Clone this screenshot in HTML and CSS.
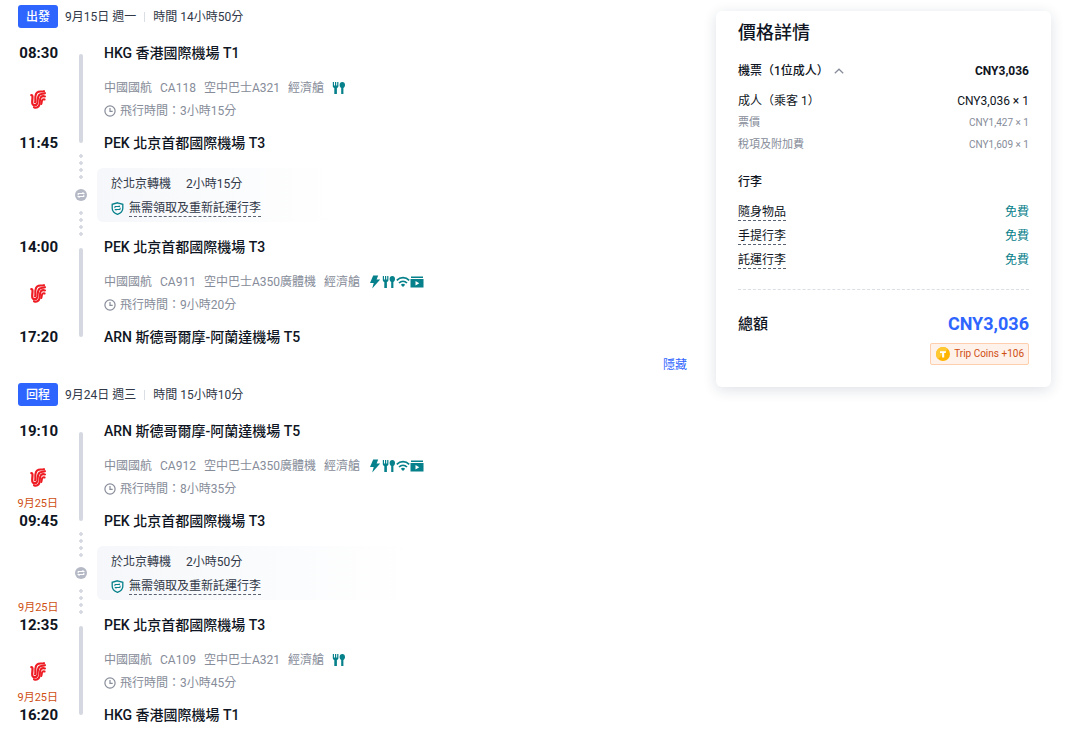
FILE: index.html
```html
<!DOCTYPE html>
<html lang="zh-Hant">
<head>
    <meta charset="UTF-8">
    <meta name="viewport" content="width=device-width, initial-scale=1.0">
    <title>行程詳情</title>
    <link rel="stylesheet" href="styles.css">
</head>
<body>
    <!-- shared icons -->
    <svg class="icon-set" aria-hidden="true">
        <symbol id="logo" viewBox="0 0 16 19">
            <g fill="none" stroke="#ee1c23" stroke-linecap="round" stroke-linejoin="round">
                <path stroke-width="2.2" d="M1.300 5.200c1 0 1.300.6 1.200 2.200l-.3 4.200c-.1 2.300.6 3.400 1.700 3.500"/>
                <path stroke-width="2.100" d="M4 17.200c2.200 1 4.900.1 5.500-2.700.6-2.900 0-5.700 1.500-7.400.9-.9 2.400-1.100 3.900-.7"/>
                <path stroke-width="2.100" d="M4.900 15c1.500.3 2.200-.8 2.500-2.600.4-3 0-6 2.200-7.700 1.500-1.200 3.700-.8 5.300-1.500"/>
                <path stroke-width="2.100" d="M5.100 12.400c.6-1.500-.1-4.500.4-6.700.6-3.200 2.900-4.300 5.300-4.200 1.200.1 2.400.2 3.200-.3"/>
                <path stroke-width="2" d="M11.200 14c.8-1.300.2-3.500 1.500-4.400.6-.4 1.300-.4 1.900-.1"/>
            </g>
        </symbol>
        <symbol id="clock" viewBox="0 0 12 12">
            <path fill="none" stroke="currentColor" stroke-width="1.2" d="M6 .9a5.100 5.100 0 1 1 0 10.200A5.100 5.100 0 0 1 6 .9zM6 3v3.300h2.700"/>
        </symbol>
        <symbol id="bolt" viewBox="0 0 14 14">
            <path fill="currentColor" d="M5.200.5h5L8.600 4.600h3.600L4.200 13.500l1.500-5.400H2z"/>
        </symbol>
        <symbol id="meal" viewBox="0 0 14 14">
            <path fill="currentColor" d="M.8 1h1.200v3.400h1V1h1.200v3.400h1V1h1.200v4c0 1.100-.6 1.800-1.500 2.100V13H2.300V7.100C1.400 6.800.8 6.100.8 5z"/>
            <path fill="currentColor" d="M10.300 1c1.700 0 2.700 1.300 2.700 3 0 1.500-.6 2.500-1.600 2.900V13H9.200V6.900C8.200 6.500 7.600 5.500 7.600 4c0-1.700 1-3 2.700-3z"/>
        </symbol>
        <symbol id="wifi" viewBox="0 0 14 14">
            <path fill="none" stroke="currentColor" stroke-width="1.700" d="M.8 5.300c3.500-3.500 8.900-3.500 12.400 0M3 8c2.300-2.200 5.700-2.200 8 0"/>
            <path fill="currentColor" d="M4.800 9.700c1.300-1.200 3.100-1.200 4.400 0L7 12z"/>
        </symbol>
        <symbol id="video" viewBox="0 0 14 14">
            <path fill="currentColor" d="M1 1.500h12V3H1z"/>
            <path fill="currentColor" fill-rule="evenodd" d="M.5 4h13v8.500H.5zM5.500 6v4.500L9.300 8.200z"/>
        </symbol>
        <symbol id="transfer" viewBox="0 0 12 12">
            <circle cx="6" cy="6" r="6" fill="#b4b9c5"/>
            <path fill="none" stroke="#fff" stroke-width="1.100" d="M3.200 6.300V4.500h5.500L7.500 3.300M8.800 5.700v1.800H3.300l1.200 1.200"/>
        </symbol>
        <symbol id="shield" viewBox="0 0 13 13">
            <path fill="none" stroke="currentColor" stroke-width="1.300" d="M6.500.8l5.300 1.500v4c0 2.700-1.900 4.800-5.300 6-3.400-1.200-5.300-3.300-5.300-6v-4z"/>
            <path fill="none" stroke="currentColor" stroke-width="1" d="M3.900 6.100V4.500h5L7.800 3.500M9.100 5.700v1.800H4l1.100 1.100"/>
        </symbol>
        <symbol id="chevron" viewBox="0 0 10 6">
            <path fill="none" stroke="currentColor" stroke-width="1.200" d="M.8 5.200L5 1.200l4.200 4"/>
        </symbol>
        <symbol id="coin" viewBox="0 0 14 14">
            <circle cx="7" cy="7" r="7" fill="#ffb400"/>
            <path fill="#ffc933" d="M2 11.900A7 7 0 0 1 11.900 2z"/>
            <path fill="#fff" d="M4 4.200h6.200l-.5 1.900H8.200v4.300H6.100V6.100H4z"/>
        </symbol>
    </svg>

    <div class="page">
        <main class="trips">
            <section class="trip">
                <header class="trip-header">
                    <span class="badge">出發</span>
                    <span class="trip-date">9月15日 週一</span>
                    <span class="trip-duration">時間 14小時50分</span>
                </header>

                <div class="leg">
                    <time class="time">08:30</time>
                    <div class="line"></div>
                    <h3 class="airport">HKG 香港國際機場 T1</h3>
                    <div class="airline"><svg class="logo"><use href="#logo"/></svg></div>
                    <div class="details">
                        <p class="flight"><span>中國國航</span><span>CA118</span><span>空中巴士A321</span><span>經濟艙</span>
                            <span class="services"><svg><use href="#meal"/></svg></span></p>
                        <p class="flying"><svg><use href="#clock"/></svg>飛行時間：3小時15分</p>
                    </div>
                    <time class="time">11:45</time>
                    <h3 class="airport">PEK 北京首都國際機場 T3</h3>
                </div>

                <div class="stopover">
                    <div class="next-day"></div>
                    <div class="dots"><svg><use href="#transfer"/></svg></div>
                    <div class="transfer">
                        <p><span>於北京轉機</span><span>2小時15分</span></p>
                        <p class="luggage-note"><svg><use href="#shield"/></svg><button type="button" class="hint">無需領取及重新託運行李</button></p>
                    </div>
                </div>

                <div class="leg">
                    <time class="time">14:00</time>
                    <div class="line"></div>
                    <h3 class="airport">PEK 北京首都國際機場 T3</h3>
                    <div class="airline"><svg class="logo"><use href="#logo"/></svg></div>
                    <div class="details">
                        <p class="flight"><span>中國國航</span><span>CA911</span><span>空中巴士A350廣體機</span><span>經濟艙</span>
                            <span class="services"><svg><use href="#bolt"/></svg><svg><use href="#meal"/></svg><svg><use href="#wifi"/></svg><svg><use href="#video"/></svg></span></p>
                        <p class="flying"><svg><use href="#clock"/></svg>飛行時間：9小時20分</p>
                    </div>
                    <time class="time">17:20</time>
                    <h3 class="airport">ARN 斯德哥爾摩-阿蘭達機場 T5</h3>
                </div>
                <a href="#" class="hide-link">隱藏</a>
            </section>

            <section class="trip">
                <header class="trip-header">
                    <span class="badge">回程</span>
                    <span class="trip-date">9月24日 週三</span>
                    <span class="trip-duration">時間 15小時10分</span>
                </header>

                <div class="leg">
                    <time class="time">19:10</time>
                    <div class="line"></div>
                    <h3 class="airport">ARN 斯德哥爾摩-阿蘭達機場 T5</h3>
                    <div class="airline"><svg class="logo"><use href="#logo"/></svg><span class="next-day">9月25日</span></div>
                    <div class="details">
                        <p class="flight"><span>中國國航</span><span>CA912</span><span>空中巴士A350廣體機</span><span>經濟艙</span>
                            <span class="services"><svg><use href="#bolt"/></svg><svg><use href="#meal"/></svg><svg><use href="#wifi"/></svg><svg><use href="#video"/></svg></span></p>
                        <p class="flying"><svg><use href="#clock"/></svg>飛行時間：8小時35分</p>
                    </div>
                    <time class="time">09:45</time>
                    <h3 class="airport">PEK 北京首都國際機場 T3</h3>
                </div>

                <div class="stopover">
                    <div class="next-day">9月25日</div>
                    <div class="dots"><svg><use href="#transfer"/></svg></div>
                    <div class="transfer transfer-wide">
                        <p><span>於北京轉機</span><span>2小時50分</span></p>
                        <p class="luggage-note"><svg><use href="#shield"/></svg><button type="button" class="hint">無需領取及重新託運行李</button></p>
                    </div>
                </div>

                <div class="leg">
                    <time class="time">12:35</time>
                    <div class="line"></div>
                    <h3 class="airport">PEK 北京首都國際機場 T3</h3>
                    <div class="airline"><svg class="logo"><use href="#logo"/></svg><span class="next-day">9月25日</span></div>
                    <div class="details">
                        <p class="flight"><span>中國國航</span><span>CA109</span><span>空中巴士A321</span><span>經濟艙</span>
                            <span class="services"><svg><use href="#meal"/></svg></span></p>
                        <p class="flying"><svg><use href="#clock"/></svg>飛行時間：3小時45分</p>
                    </div>
                    <time class="time">16:20</time>
                    <h3 class="airport">HKG 香港國際機場 T1</h3>
                </div>
            </section>
        </main>

        <aside class="price-card">
            <h2>價格詳情</h2>
            <div class="row row-strong">
                <button type="button" class="toggle" aria-expanded="true">機票（1位成人）<svg><use href="#chevron"/></svg></button>
                <span>CNY3,036</span>
            </div>
            <div class="fares">
                <div class="row"><span>成人（乘客 1）</span><span>CNY3,036 × 1</span></div>
                <div class="row row-small"><span>票價</span><span class="amount">CNY1,427 × 1</span></div>
                <div class="row row-small"><span>稅項及附加費</span><span class="amount">CNY1,609 × 1</span></div>
            </div>
            <h3>行李</h3>
            <div class="luggage">
                <div class="row"><button type="button" class="hint">隨身物品</button><span class="free">免費</span></div>
                <div class="row"><button type="button" class="hint">手提行李</button><span class="free">免費</span></div>
                <div class="row"><button type="button" class="hint">託運行李</button><span class="free">免費</span></div>
            </div>
            <div class="total">
                <span class="total-label">總額</span>
                <span class="total-price">CNY3,036</span>
            </div>
            <div class="coins"><svg><use href="#coin"/></svg>Trip Coins +106</div>
        </aside>
    </div>
</body>
</html>
```
FILE: styles.css
```css
* {
    box-sizing: border-box;
}

body {
    margin: 0;
    background-color: #fff;
    color: #0f1523;
    font-family: Roboto, "Noto Sans CJK TC", sans-serif;
    font-size: 12px;
    line-height: 20px;
}

h2, h3, p {
    margin: 0;
}

svg {
    display: block;
    flex: none;
}

button {
    padding: 0;
    border: none;
    background: none;
    color: inherit;
    font: inherit;
    cursor: pointer;
}

.icon-set {
    position: absolute;
    width: 0;
    height: 0;
}

.page {
    display: flex;
    align-items: flex-start;
    gap: 29px;
    padding: 5px 29px 9px 18px;
}

.trips {
    flex: 1;
    min-width: 0;
}

.trip {
    display: flex;
    flex-direction: column;
}

.trip-header {
    display: flex;
    align-items: center;
    margin-bottom: 14px;
    color: #313848;
}

.badge {
    margin-right: 7px;
    padding: 1px 8px 0;
    border-radius: 3px;
    background-color: #2f65ff;
    color: #fff;
    font-weight: 500;
    line-height: 22px;
}

.trip-duration {
    margin-left: 8px;
    padding-left: 8px;
    border-left: 1px solid #dadfe6;
    line-height: 10px;
}

/* time | line | airport and flight */
.leg {
    display: grid;
    grid-template-columns: 40px 46px 1fr;
    grid-template-rows: 20px 70px 20px;
}

.time {
    grid-column: 1;
    font-size: 15px;
    font-weight: 700;
    line-height: 22px;
    text-align: right;
}

.line {
    grid-column: 2;
    grid-row: 1 / 4;
    justify-self: center;
    width: 4px;
    margin: 12px 0 9px;
    border-radius: 2px;
    background-color: #d5d8e1;
}

.airport {
    grid-column: 3;
    font-size: 14px;
    font-weight: 500;
    line-height: 22px;
}

.airline {
    display: flex;
    flex-direction: column;
    align-items: center;
    justify-content: space-between;
    padding-top: 28px;
}

.logo {
    width: 16px;
    height: 19px;
}

.next-day {
    align-self: flex-end;
    color: #cf4f12;
    font-size: 11px;
    line-height: 12px;
    text-align: right;
    white-space: nowrap;
}

.details {
    grid-column: 3;
    padding-top: 14px;
    color: #868c99;
}

.flight,
.flying {
    display: flex;
    align-items: center;
    height: 23px;
}

.flight {
    gap: 8px;
}

.flying {
    gap: 4px;
}

.flying svg {
    width: 12px;
    height: 12px;
}

.services {
    display: flex;
    color: #06808a;
}

.services svg {
    width: 14px;
    height: 14px;
}

.stopover {
    display: grid;
    grid-template-columns: 40px 46px 1fr;
}

.dots {
    display: flex;
    flex-direction: column;
    align-items: center;
    justify-content: space-between;
    padding-top: 2px;
}

.dots::before,
.dots::after {
    content: "";
    width: 4px;
    height: 25px;
    background: radial-gradient(circle at 2px 2px, #d5d8e1 1.5px, transparent 2px) 0 0 / 4px 7px;
}

.dots svg {
    width: 12px;
    height: 12px;
}

.transfer {
    width: 240px;
    margin: 16px 0 14px -7px;
    padding: 4px 14px 2px;
    border-radius: 6px;
    background: linear-gradient(90deg, #f5f7fa, #fff);
    color: #313848;
}

.transfer-wide {
    width: 320px;
}

.transfer p {
    display: flex;
    align-items: center;
    gap: 15px;
    height: 24px;
}

.transfer .luggage-note {
    gap: 5px;
}

.luggage-note svg {
    width: 13px;
    height: 13px;
    color: #06808a;
}

.hint {
    border-bottom: 1px dashed #5b6373;
    line-height: 16px;
}

.hide-link {
    align-self: flex-end;
    margin: 11px 0 10px;
    color: #2f65ff;
    line-height: 16px;
    text-decoration: none;
}

.price-card {
    width: 335px;
    margin-top: 6px;
    padding: 12px 22px 22px;
    border-radius: 6px;
    background-color: #fff;
    box-shadow: 0 3px 14px rgba(15, 41, 77, 0.14);
}

.price-card h2 {
    margin-bottom: 17px;
    font-size: 18px;
    font-weight: 500;
}

.price-card h3 {
    margin: 15px 0 7px;
    font-size: 12px;
    font-weight: 500;
    line-height: 22px;
}

.row {
    display: flex;
    align-items: center;
    justify-content: space-between;
    height: 22px;
}

.row-strong {
    margin-bottom: 8px;
    font-weight: 700;
}

.toggle {
    display: flex;
    align-items: center;
    gap: 5px;
    font-weight: 500;
}

.toggle svg {
    width: 10px;
    height: 6px;
    color: #868c99;
}

.row-small {
    color: #868c99;
    font-size: 11px;
}

.amount {
    font-size: 10px;
}

.luggage .row {
    height: 24px;
}

.free {
    color: #06808a;
}

.total {
    display: flex;
    align-items: center;
    justify-content: space-between;
    margin-top: 17px;
    padding-top: 22px;
    border-top: 1px dashed #dadfe6;
    line-height: 24px;
}

.total-label {
    font-size: 15px;
    font-weight: 500;
}

.total-price {
    color: #2f65ff;
    font-size: 18px;
    font-weight: 700;
}

.coins {
    display: flex;
    align-items: center;
    gap: 4px;
    width: fit-content;
    margin: 7px 0 0 auto;
    padding: 0 4px 0 5px;
    border: 1px solid #ffceac;
    border-radius: 2px;
    background-color: #fff2ea;
    color: #cf4f12;
    font-size: 10px;
}

.coins svg {
    width: 14px;
    height: 14px;
}
```
